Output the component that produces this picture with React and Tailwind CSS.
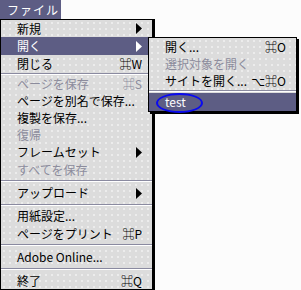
const FONT = { fontFamily: '"Noto Sans CJK JP", "DejaVu Sans", sans-serif' };

const mainItems = [
  { label: '新規', arrow: true, h: 'h-[17px]' },
  { label: '開く', arrow: true, active: true, h: 'h-[18px]' },
  { label: '閉じる', shortcut: '⌘W', h: 'h-[17px]' },
  { sep: true, h: 'h-[3px]' },
  { label: 'ページを保存', shortcut: '⌘S', disabled: true, h: 'h-[17px]' },
  { label: 'ページを別名で保存...', h: 'h-[17px]' },
  { label: '複製を保存...', h: 'h-[17px]' },
  { label: '復帰', disabled: true, h: 'h-[17px]' },
  { label: 'フレームセット', arrow: true, h: 'h-[18px]' },
  { label: 'すべてを保存', disabled: true, h: 'h-[17px]' },
  { sep: true, h: 'h-[6px]' },
  { label: 'アップロード', arrow: true, h: 'h-[18px]' },
  { sep: true, h: 'h-[5px]' },
  { label: '用紙設定...', h: 'h-[18px]' },
  { label: 'ページをプリント', shortcut: '⌘P', h: 'h-[17px]' },
  { sep: true, h: 'h-[6px]' },
  { label: 'Adobe Online...', h: 'h-[18px]' },
  { sep: true, h: 'h-[6px]' },
  { label: '終了', shortcut: '⌘Q', h: 'h-[17px]' },
];

const subItems = [
  { label: '開く...', shortcut: '⌘O', h: 'h-[17px]' },
  { label: '選択対象を開く', disabled: true, h: 'h-[17px]' },
  { label: 'サイトを開く...', shortcut: '⌥⌘O', h: 'h-[17px]' },
  { sep: true, h: 'h-[4px]' },
  { label: 'test', active: true, circled: true, h: 'h-[18px]' },
];

function Arrow({ white }) {
  return (
    <svg width="6" height="11" viewBox="0 0 6 11" className="shrink-0">
      <polygon points="0,0 6,5.5 0,11" fill={white ? '#fff' : '#000'} />
    </svg>
  );
}

function Separator({ h }) {
  return (
    <div className={`${h} flex flex-col justify-center`}>
      <div className="h-px bg-[#8a8aa0]" />
      <div className="h-px bg-white" />
    </div>
  );
}

function Row({ item }) {
  if (item.sep) return <Separator h={item.h} />;
  const color = item.active ? 'text-white' : item.disabled ? 'text-[#8c8c9c]' : 'text-black';
  const bg = item.active ? 'bg-[#5d5d84]' : '';
  return (
    <div className={`${item.h} ${bg} ${color} relative flex items-center pl-[16px] pr-[10px] text-[12px] leading-none`}>
      <span className="flex-1 whitespace-nowrap">{item.label}</span>
      {item.shortcut && <span className="whitespace-nowrap">{item.shortcut}</span>}
      {item.arrow && <Arrow white={item.active} />}
      {item.circled && (
        <div className="absolute left-[7px] top-0 h-[20px] w-[47px] rounded-[50%] border-2 border-[#0a0af0]" />
      )}
    </div>
  );
}

export default function App() {
  return (
    <div className="h-[290px] w-[301px] overflow-hidden bg-[#fcfcfc]" style={FONT}>
      <div className="flex h-[19px]">
        <div className="flex w-[61px] items-center whitespace-nowrap bg-[#5d5d84] pl-[7px] text-[12px] leading-none tracking-[1px] text-white">
          ファイル
        </div>
      </div>
      <div className="relative">
        <div className="w-[153px] border border-black bg-[#dcdcdc] bg-[radial-gradient(#ffffff_0.6px,transparent_0.8px)] bg-[length:6px_6px] shadow-[2px_0_0_#000]">
          {mainItems.map((item, i) => (
            <Row key={i} item={item} />
          ))}
        </div>
        <div className="absolute left-[148px] top-[18px] w-[149px] border border-black bg-[#dcdcdc] bg-[radial-gradient(#ffffff_0.6px,transparent_0.8px)] bg-[length:6px_6px] shadow-[2px_2px_0_#000]">
          {subItems.map((item, i) => (
            <Row key={i} item={item} />
          ))}
        </div>
      </div>
    </div>
  );
}
